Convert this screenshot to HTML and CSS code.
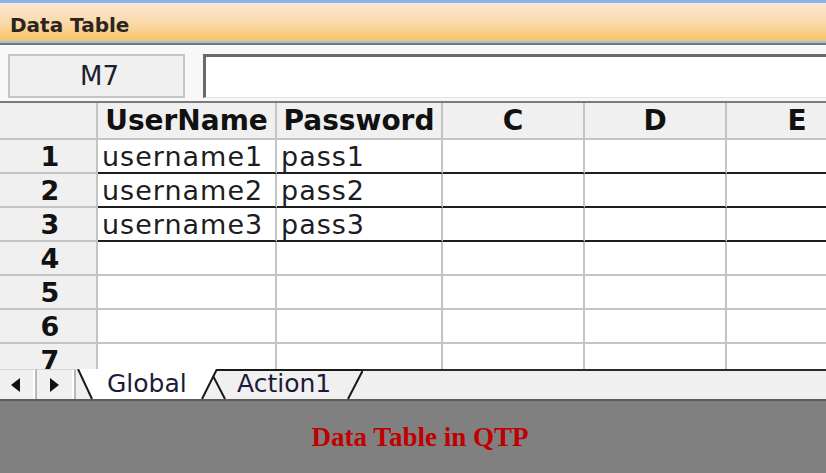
FILE: index.html
```html
<!DOCTYPE html>
<html lang="en">
<head>
    <meta charset="UTF-8">
    <meta name="viewport" content="width=device-width, initial-scale=1.0">
    <title>Data Table in QTP</title>
    <link rel="stylesheet" href="styles.css">
</head>
<body>
<div class="titlebar">Data Table</div>

<div class="formula">
    <div class="namebox">M7</div>
    <div class="input-line"></div>
</div>

<div class="grid">
    <div class="row head">
        <div class="cell rh"></div>
        <div class="cell c1">UserName</div>
        <div class="cell c2">Password</div>
        <div class="cell c3">C</div>
        <div class="cell c4">D</div>
        <div class="cell c5">E</div>
    </div>
    <div class="row filled">
        <div class="cell rh">1</div>
        <div class="cell c1">username1</div>
        <div class="cell c2">pass1</div>
        <div class="cell c3"></div>
        <div class="cell c4"></div>
        <div class="cell c5"></div>
    </div>
    <div class="row filled">
        <div class="cell rh">2</div>
        <div class="cell c1">username2</div>
        <div class="cell c2">pass2</div>
        <div class="cell c3"></div>
        <div class="cell c4"></div>
        <div class="cell c5"></div>
    </div>
    <div class="row filled">
        <div class="cell rh">3</div>
        <div class="cell c1">username3</div>
        <div class="cell c2">pass3</div>
        <div class="cell c3"></div>
        <div class="cell c4"></div>
        <div class="cell c5"></div>
    </div>
    <div class="row">
        <div class="cell rh">4</div>
        <div class="cell c1"></div>
        <div class="cell c2"></div>
        <div class="cell c3"></div>
        <div class="cell c4"></div>
        <div class="cell c5"></div>
    </div>
    <div class="row">
        <div class="cell rh">5</div>
        <div class="cell c1"></div>
        <div class="cell c2"></div>
        <div class="cell c3"></div>
        <div class="cell c4"></div>
        <div class="cell c5"></div>
    </div>
    <div class="row">
        <div class="cell rh">6</div>
        <div class="cell c1"></div>
        <div class="cell c2"></div>
        <div class="cell c3"></div>
        <div class="cell c4"></div>
        <div class="cell c5"></div>
    </div>
    <div class="row">
        <div class="cell rh">7</div>
        <div class="cell c1"></div>
        <div class="cell c2"></div>
        <div class="cell c3"></div>
        <div class="cell c4"></div>
        <div class="cell c5"></div>
    </div>
</div>

<div class="tabbar">
    <div class="arrow prev"><span class="tri-left"></span></div>
    <div class="arrow next"><span class="tri-right"></span></div>
    <div class="tabs">
        <svg class="tab-shapes" width="287" height="31" viewBox="0 0 287 31">
            <path d="M134 1 L287 1 L272 30 L149 30 Z" fill="#f0f0f0"/>
            <path d="M134 1 L149 30 M134 1 L287 1 L272 30" fill="none" stroke="#1a1a1a" stroke-width="2"/>
            <path d="M2 0 L141 0 L126 30 L16 30 Z" fill="#ffffff"/>
            <path d="M2 0 L16 30 M141 0 L126 30" fill="none" stroke="#1a1a1a" stroke-width="2"/>
        </svg>
        <span class="tab-label global">Global</span>
        <span class="tab-label">Action1</span>
    </div>
    <div class="tab-fill"></div>
</div>

<div class="caption">Data Table in QTP</div>
</body>
</html>
```

FILE: styles.css
```css
body {
    margin: 0;
    width: 826px;
    height: 473px;
    overflow: hidden;
    background: #f0f0f0;
    font-family: "DejaVu Sans", sans-serif;
    color: #1c1c24;
}

.titlebar {
    box-sizing: border-box;
    border-top: 3px solid #86b6ea;
    border-bottom: 2px solid #9dc2e4;
    height: 43px;
    padding: 10px 0 0 10px;
    background: linear-gradient(#fde6d2, #fad9a8 55%, #f8c266);
    font-size: 20px;
    font-weight: bold;
    color: #2b2522;
}

.formula {
    height: 58px;
    box-sizing: border-box;
    border-top: 2px solid #6e7680;
    padding: 9px 0 0 8px;
    display: flex;
    gap: 18px;
    background: #f8f8f8;
}

.namebox {
    width: 177px;
    height: 44px;
    box-sizing: border-box;
    border: 2px solid #c6c6c6;
    background: #f0f0f0;
    display: flex;
    align-items: center;
    justify-content: center;
    padding-left: 6px;
    font-size: 26px;
    color: #1e1e2e;
}

.input-line {
    flex: 1;
    height: 44px;
    box-sizing: border-box;
    background: #ffffff;
    border-top: 3px solid #6a6a6a;
    border-left: 3px solid #6a6a6a;
    border-bottom: 1px solid #e2e2e2;
}

.grid {
    height: 268px;
    box-sizing: border-box;
    border-top: 2px solid #7b7b7b;
    overflow: hidden;
    background: #ffffff;
}

.row {
    display: flex;
    height: 34px;
}

.row.head {
    height: 37px;
}

.cell {
    flex: none;
    box-sizing: border-box;
    border-right: 2px solid #c4c4c4;
    border-bottom: 2px solid #c4c4c4;
    display: flex;
    align-items: center;
    padding-left: 4px;
    font-size: 27px;
    letter-spacing: 1px;
    white-space: nowrap;
    overflow: hidden;
}

.c1 { width: 179px; }
.c2 { width: 166px; }
.c3 { width: 142px; }
.c4 { width: 142px; }
.c5 { width: 142px; }

.cell.rh {
    width: 98px;
    padding: 0 0 0 4px;
    justify-content: center;
    background: #f0f0f0;
    font-size: 27px;
    font-weight: bold;
    letter-spacing: 0;
    color: #111;
}

.head .cell {
    background: #f0f0f0;
    justify-content: center;
    padding: 0;
    font-size: 28px;
    font-weight: bold;
    letter-spacing: 0;
    color: #111;
}

.filled .cell:not(.rh) {
    border-bottom-color: #1e1e1e;
}

.tabbar {
    height: 30px;
    display: flex;
    background: #f0f0f0;
}

.arrow {
    box-sizing: border-box;
    height: 30px;
    border-top: 1px solid #d4d4d4;
    border-right: 2px solid #b8b8b8;
    box-shadow: inset -2px 0 0 #ffffff;
    display: flex;
    align-items: center;
    justify-content: center;
}

.arrow.prev { width: 37px; }
.arrow.next { width: 39px; }

.tri-left {
    width: 0;
    height: 0;
    border-top: 7px solid transparent;
    border-bottom: 7px solid transparent;
    border-right: 9px solid #111;
    margin-right: 4px;
}

.tri-right {
    width: 0;
    height: 0;
    border-top: 7px solid transparent;
    border-bottom: 7px solid transparent;
    border-left: 9px solid #111;
    margin-right: 2px;
}

.tabs {
    position: relative;
    width: 287px;
    height: 30px;
    display: flex;
    align-items: center;
}

.tab-shapes {
    position: absolute;
    left: 0;
    top: 0;
}

.tab-label {
    position: relative;
    font-size: 25px;
    line-height: 30px;
    color: #1b1b3a;
}

.tab-label.global {
    margin-left: 31px;
    width: 130px;
}

.tab-fill {
    flex: 1;
    border-top: 2px solid #2a2a2a;
}

.caption {
    height: 74px;
    box-sizing: border-box;
    border-top: 2px solid #5c5c5c;
    background: #808080;
    display: flex;
    align-items: center;
    justify-content: center;
    padding-left: 14px;
    font-family: "Liberation Serif", serif;
    font-weight: bold;
    font-size: 27px;
    color: #c00000;
}
```
